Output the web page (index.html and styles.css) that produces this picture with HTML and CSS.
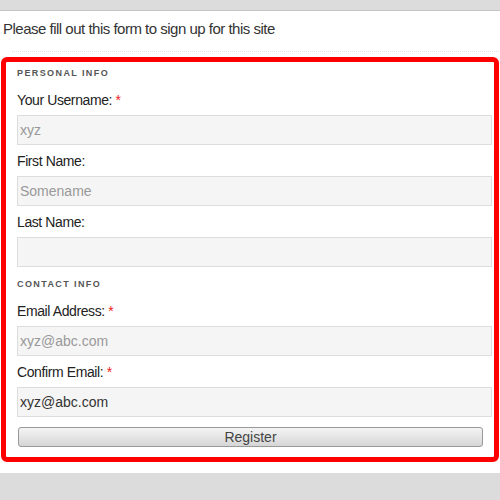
FILE: index.html
```html
<!DOCTYPE html>
<html lang="en">
<head>
    <meta charset="UTF-8">
    <title>Sign Up</title>
    <link rel="stylesheet" href="styles.css">
</head>
<body>

<div class="topbar"></div>

<div class="page">
    <p class="intro">Please fill out this form to sign up for this site</p>
    <div class="divider"></div>

    <form class="signup">
        <h3 class="section">Personal Info</h3>
        <label for="username">Your Username: <span class="req">*</span></label>
        <input type="text" id="username" placeholder="xyz">

        <label for="firstname">First Name:</label>
        <input type="text" id="firstname" placeholder="Somename">

        <label for="lastname">Last Name:</label>
        <input type="text" id="lastname">

        <h3 class="section">Contact Info</h3>
        <label for="email">Email Address: <span class="req">*</span></label>
        <input type="text" id="email" placeholder="xyz@abc.com">

        <label for="confirm">Confirm Email: <span class="req">*</span></label>
        <input type="text" id="confirm" value="xyz@abc.com">

        <button type="button">Register</button>
    </form>
</div>

<div class="footer"></div>

</body>
</html>
```

FILE: styles.css
```css
body {
    margin: 0;
    font-family: "Liberation Sans", Arial, sans-serif;
    background-color: #dcdcdc;
}

.topbar {
    height: 10px;
    background-color: #dcdcdc;
    border-bottom: 1px solid #c4c4c4;
}

.page {
    background-color: #fff;
    padding: 9px 1px 11px 1px;
}

.intro {
    margin: 0 0 0 2px;
    font-size: 15px;
    line-height: 18px;
    letter-spacing: -0.5px;
    color: #333;
}

.divider {
    margin: 13px 0 0 11px;
    border-top: 1px dotted #e2e2e2;
}

.signup {
    margin-top: 5px;
    border: 5px solid #f00;
    border-radius: 6px;
    padding: 2px 2px 10px 11px;
    display: flex;
    flex-direction: column;
}

.section {
    margin: 0 0 10px;
    font-size: 9px;
    font-weight: bold;
    letter-spacing: 1.4px;
    text-transform: uppercase;
    color: #555;
    line-height: 18px;
}

label {
    font-size: 14px;
    line-height: 17px;
    letter-spacing: -0.4px;
    color: #222;
    margin-bottom: 6px;
}

.req {
    color: #e22;
}

input[type="text"] {
    height: 30px;
    box-sizing: border-box;
    margin: 0 0 8px;
    padding: 0 2px;
    border: 1px solid #ddd;
    background-color: #f5f5f5;
    font-family: inherit;
    font-size: 14px;
    color: #333;
}

input::placeholder {
    color: #999;
}

button {
    margin: 2px 9px 0 1px;
    height: 20px;
    border: 1px solid #999;
    border-radius: 3px;
    background: linear-gradient(#f4f4f4, #d6d6d6);
    font-family: inherit;
    font-size: 14px;
    color: #444;
}
```
